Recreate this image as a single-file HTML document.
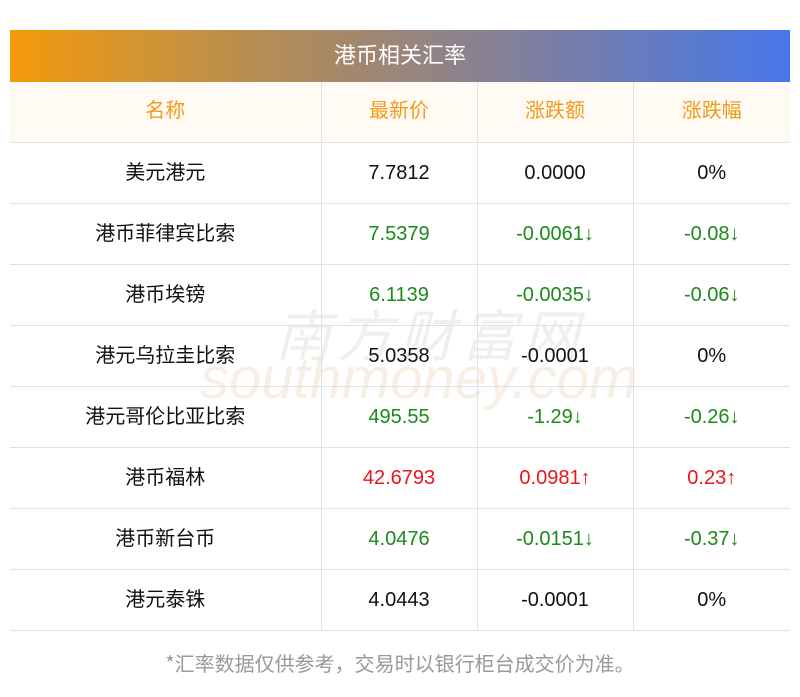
<!DOCTYPE html>
<html><head><meta charset="utf-8"><style>
body{margin:0;width:800px;height:697px;background:#fff;font-family:"Liberation Sans","Noto Sans CJK SC",sans-serif;position:relative;overflow:hidden}
.title{position:absolute;left:10px;top:30px;width:780px;height:52px;background:linear-gradient(90deg,#f39a0a,#b98e50 30%,#8a8190 60%,#4776ea);color:#fff;font-size:22px;text-align:center;line-height:48px;font-family:"Noto Sans CJK SC",sans-serif}
table{position:absolute;left:10px;top:82px;border-collapse:collapse;width:780px;table-layout:fixed}
td{height:60px;border:1px solid #e0e0e6;text-align:center;font-size:20px;color:#111;padding:0}
td span{position:relative;top:-2px}
td.c{font-family:"Noto Sans CJK SC",sans-serif;line-height:20px}
tr td:first-child{border-left:none}
tr td:last-child{border-right:none}
tr.h td{background:#fffaf3;color:#f39a1a;border-top:none;font-family:"Noto Sans CJK SC",sans-serif}
tr.h td span{top:-4px}
.g{color:#1b8a1b}.r{color:#e8141e}
.foot{position:absolute;top:648px;left:0;width:800px;text-align:center;color:#999;font-size:20px;font-family:"Noto Sans CJK SC",sans-serif}
.wm{position:absolute;color:#f3e4d4;opacity:.6;font-size:56px;font-style:italic}
</style></head><body>
<div class="title">港币相关汇率</div>
<div class="wm" style="left:275px;top:292px;color:#e6e6e6;letter-spacing:6px;font-family:'Noto Sans CJK SC',sans-serif">南方财富网</div>
<div class="wm" style="left:200px;top:345px;font-size:58px">southmoney.com</div>
<table>
<col style="width:311px"><col style="width:156px"><col style="width:156px"><col style="width:157px">
<tr class="h"><td><span>名称</span></td><td><span>最新价</span></td><td><span>涨跌额</span></td><td><span>涨跌幅</span></td></tr>
<tr><td class="c"><span>美元港元</span></td><td>7.7812</td><td>0.0000</td><td>0%</td></tr>
<tr><td class="c"><span>港币菲律宾比索</span></td><td class="g">7.5379</td><td class="g">-0.0061↓</td><td class="g">-0.08↓</td></tr>
<tr><td class="c"><span>港币埃镑</span></td><td class="g">6.1139</td><td class="g">-0.0035↓</td><td class="g">-0.06↓</td></tr>
<tr><td class="c"><span>港元乌拉圭比索</span></td><td>5.0358</td><td>-0.0001</td><td>0%</td></tr>
<tr><td class="c"><span>港元哥伦比亚比索</span></td><td class="g">495.55</td><td class="g">-1.29↓</td><td class="g">-0.26↓</td></tr>
<tr><td class="c"><span>港币福林</span></td><td class="r">42.6793</td><td class="r">0.0981↑</td><td class="r">0.23↑</td></tr>
<tr><td class="c"><span>港币新台币</span></td><td class="g">4.0476</td><td class="g">-0.0151↓</td><td class="g">-0.37↓</td></tr>
<tr><td class="c"><span>港元泰铢</span></td><td>4.0443</td><td>-0.0001</td><td>0%</td></tr>
</table>
<div class="foot">*汇率数据仅供参考，交易时以银行柜台成交价为准。</div>
</body></html>
